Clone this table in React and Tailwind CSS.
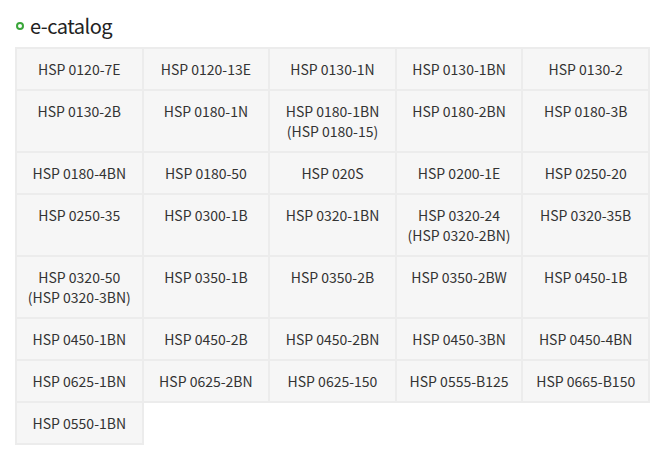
const items = [
  ['HSP 0120-7E', 'HSP 0120-13E', 'HSP 0130-1N', 'HSP 0130-1BN', 'HSP 0130-2'],
  ['HSP 0130-2B', 'HSP 0180-1N', 'HSP 0180-1BN\n(HSP 0180-15)', 'HSP 0180-2BN', 'HSP 0180-3B'],
  ['HSP 0180-4BN', 'HSP 0180-50', 'HSP 020S', 'HSP 0200-1E', 'HSP 0250-20'],
  ['HSP 0250-35', 'HSP 0300-1B', 'HSP 0320-1BN', 'HSP 0320-24\n(HSP 0320-2BN)', 'HSP 0320-35B'],
  ['HSP 0320-50\n(HSP 0320-3BN)', 'HSP 0350-1B', 'HSP 0350-2B', 'HSP 0350-2BW', 'HSP 0450-1B'],
  ['HSP 0450-1BN', 'HSP 0450-2B', 'HSP 0450-2BN', 'HSP 0450-3BN', 'HSP 0450-4BN'],
  ['HSP 0625-1BN', 'HSP 0625-2BN', 'HSP 0625-150', 'HSP 0555-B125', 'HSP 0665-B150'],
  ['HSP 0550-1BN'],
];

export default function App() {
  return (
    <div
      className="w-[660px] h-[456px] bg-white px-[15px] pt-[12px] text-[#222]"
      style={{ fontFamily: '"Noto Sans CJK KR", "Noto Sans", sans-serif' }}
    >
      {/* Title */}
      <div className="flex items-center gap-[6px] h-[28px] mb-[7px]">
        <span className="w-[8px] h-[8px] rounded-full border-2 border-[#3aa63a] ml-[1px]" />
        <h2 className="text-[20px] leading-[28px] tracking-[-0.5px] text-[#222]">e-catalog</h2>
      </div>

      <table className="w-[635px] border-collapse table-fixed text-[14px] leading-[20px]">
        <tbody>
          {items.map((row, i) => (
            <tr key={i}>
              {row.map((t) => (
                <td
                  key={t}
                  className="border-2 border-[#ececec] bg-[#f6f6f6] px-1 py-[10px] text-center align-top whitespace-pre-line text-[#333]"
                >
                  {t}
                </td>
              ))}
            </tr>
          ))}
        </tbody>
      </table>
    </div>
  );
}
